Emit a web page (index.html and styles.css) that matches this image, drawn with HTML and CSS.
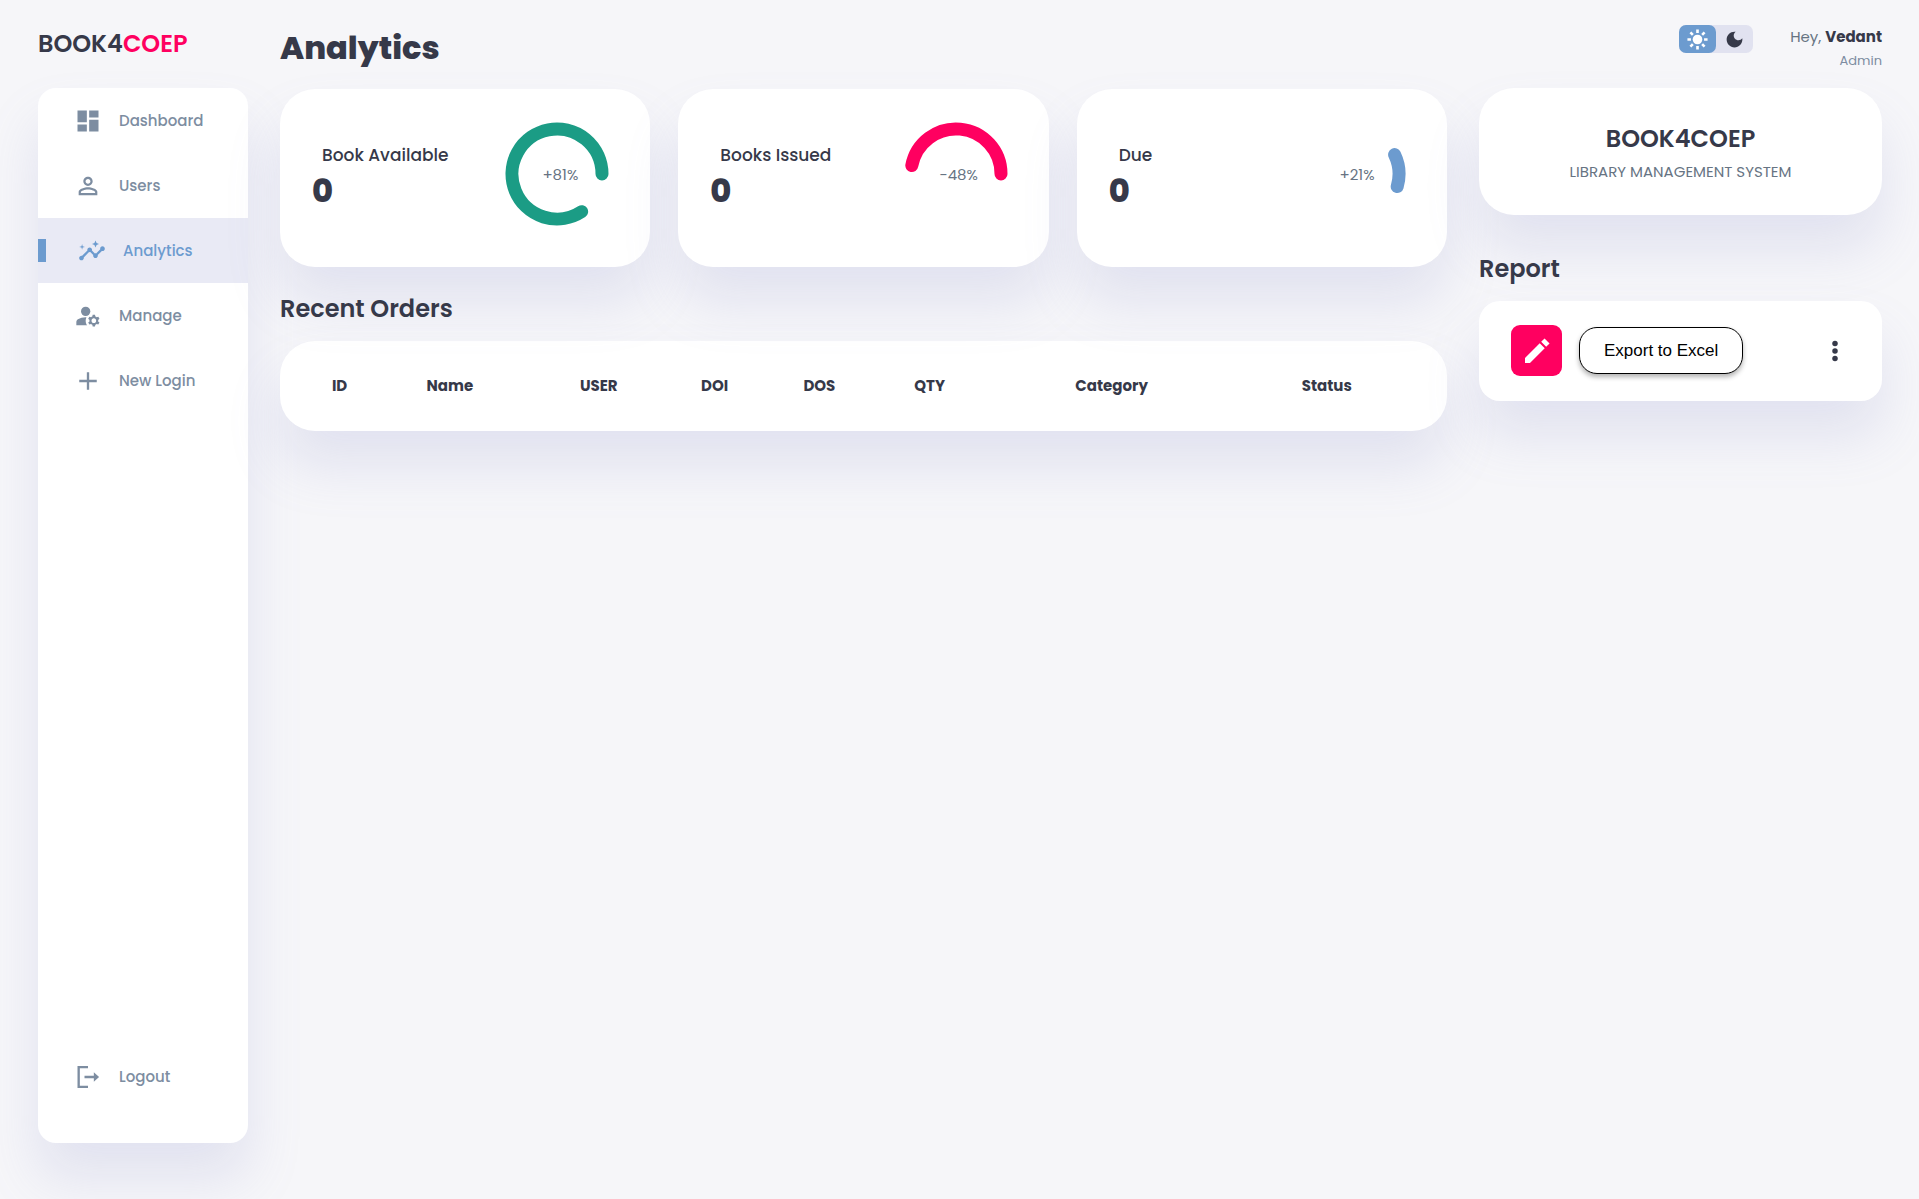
FILE: index.html
```html
<!DOCTYPE html>
<html lang="en">
<head>
<meta charset="utf-8">
<meta name="viewport" content="width=device-width, initial-scale=1">
<title>BOOK4COEP - Analytics</title>
<link rel="stylesheet" href="styles.css">
</head>
<body>
<div class="container">
  <aside>
    <div class="logo">BOOK4<span class="danger">COEP</span></div>
    <nav class="sidebar" aria-label="Main">
      <a href="#dashboard"><svg class="icon" viewBox="0 0 24 24" aria-hidden="true"><path d="M3 13h8V3H3v10zm0 8h8v-6H3v6zm10 0h8V11h-8v10zm0-18v6h8V3h-8z"/></svg>Dashboard</a>
      <a href="#users"><svg class="icon" viewBox="0 0 24 24" aria-hidden="true"><path d="M12 5.9c1.16 0 2.1.94 2.1 2.1s-.94 2.1-2.1 2.1S9.9 9.16 9.9 8s.94-2.1 2.1-2.1m0 9c2.97 0 6.1 1.46 6.1 2.1v1.1H5.9V17c0-.64 3.13-2.1 6.1-2.1M12 4C9.79 4 8 5.79 8 8s1.79 4 4 4 4-1.79 4-4-1.79-4-4-4zm0 9c-2.67 0-8 1.34-8 4v3h16v-3c0-2.66-5.33-4-8-4z"/></svg>Users</a>
      <a href="#analytics" class="active" aria-current="page"><svg class="icon" viewBox="0 0 24 24" aria-hidden="true"><path d="M21 8c-1.45 0-2.26 1.44-1.93 2.51l-3.55 3.56c-.3-.09-.74-.09-1.04 0l-2.55-2.55C12.27 10.45 11.46 9 10 9c-1.45 0-2.27 1.44-1.93 2.52l-4.56 4.55C2.44 15.74 1 16.55 1 18c0 1.1.9 2 2 2 1.45 0 2.26-1.44 1.93-2.51l4.55-4.56c.3.09.74.09 1.04 0l2.55 2.55C12.73 16.55 13.54 18 15 18c1.45 0 2.27-1.44 1.93-2.52l3.56-3.55C21.56 12.26 23 11.45 23 10c0-1.1-.9-2-2-2z"/><path d="M15 9l.94-2.07L18 6l-2.06-.93L15 3l-.92 2.07L12 6l2.08.93zM3.5 11L4 9l2-.5L4 8l-.5-2L3 8l-2 .5L3 9z"/></svg>Analytics</a>
      <a href="#manage"><svg class="icon" viewBox="0 0 24 24" aria-hidden="true"><circle cx="10" cy="8" r="4"/><path d="M10.67 13.02C10.45 13.01 10.23 13 10 13c-2.42 0-4.68.67-6.61 1.82C2.51 15.34 2 16.32 2 17.35V20h9.26C10.47 18.87 10 17.49 10 16c0-1.07.25-2.07.67-2.98z"/><path fill-rule="evenodd" d="M20.75 16c0-.22-.03-.42-.06-.63l1.14-1.01-1-1.73-1.45.49c-.32-.27-.68-.48-1.08-.63L18 11h-2l-.3 1.49c-.4.15-.76.36-1.08.63l-1.45-.49-1 1.73 1.14 1.01c-.03.21-.06.41-.06.63s.03.42.06.63l-1.14 1.01 1 1.73 1.45-.49c.32.27.68.48 1.08.63L16 21h2l.3-1.49c.4-.15.76-.36 1.08-.63l1.45.49 1-1.73-1.14-1.01c.03-.21.06-.41.06-.63zM17 18c-1.1 0-2-.9-2-2s.9-2 2-2 2 .9 2 2-.9 2-2 2z"/></svg>Manage</a>
      <a href="#new-login"><svg class="icon" viewBox="0 0 24 24" aria-hidden="true"><path d="M19.5 13H13v6.500h-2V13H4.500v-2H11V4.500h2V11h6.500z"/></svg>New Login</a>
      <a href="#logout" class="logout"><svg class="icon" viewBox="0 0 24 24" aria-hidden="true"><path d="M9 11h8V8l4.500 4-4.500 4v-3H9z"/><path d="M5 4.500h7V2.500H3v19h9v-2H5z"/></svg>Logout</a>
    </nav>
  </aside>

  <main>
    <h1>Analytics</h1>
    <div class="insights">
      <section class="card insight">
        <div>
          <h3>Book Available</h3>
          <p class="count">0</p>
        </div>
        <div class="progress">
          <svg class="ring ring-green" viewBox="-53 -53 106 106" aria-hidden="true"><path d="M45 0A45 45 0 1 0 24.640 37.650"/></svg>
          <span>+81%</span>
        </div>
      </section>
      <section class="card insight">
        <div>
          <h3>Books Issued</h3>
          <p class="count">0</p>
        </div>
        <div class="progress">
          <svg class="ring ring-pink" viewBox="-53 -53 106 106" aria-hidden="true"><path d="M45 0A45 45 0 0 0 -44.200 -8.500"/></svg>
          <span>-48%</span>
        </div>
      </section>
      <section class="card insight">
        <div>
          <h3>Due</h3>
          <p class="count">0</p>
        </div>
        <div class="progress">
          <svg class="ring ring-blue" viewBox="-53 -53 106 106" aria-hidden="true"><path d="M43.200 12.600A45 45 0 0 0 40.600 -19.400"/></svg>
          <span>+21%</span>
        </div>
      </section>
    </div>

    <section class="orders">
      <h2>Recent Orders</h2>
      <div class="card table-card">
        <table>
          <colgroup><col class="c-id"><col class="c-name"><col class="c-user"><col class="c-doi"><col class="c-dos"><col class="c-qty"><col class="c-category"><col class="c-status"></colgroup>
          <thead>
            <tr><th>ID</th><th>Name</th><th>USER</th><th>DOI</th><th>DOS</th><th>QTY</th><th>Category</th><th>Status</th></tr>
          </thead>
        </table>
      </div>
    </section>
  </main>

  <div class="right">
    <div class="top">
      <div class="theme-toggler">
        <button type="button" class="on" aria-label="Light theme"><svg viewBox="0 0 24 24" aria-hidden="true"><circle cx="12" cy="12" r="5.500"/><path class="rays" d="M12 .5v4M12 19.500v4M.5 12h4M19.500 12h4M3.900 3.900l2.800 2.800M17.300 17.300l2.800 2.800M3.900 20.100l2.800-2.800M17.300 6.700l2.800-2.800"/></svg></button>
        <button type="button" aria-label="Dark theme"><svg viewBox="0 0 24 24" aria-hidden="true"><path d="M12 3c-4.970 0-9 4.030-9 9s4.030 9 9 9 9-4.030 9-9c0-.46-.04-.92-.1-1.360-.98 1.370-2.580 2.260-4.400 2.260-2.980 0-5.400-2.420-5.400-5.400 0-1.810.89-3.420 2.260-4.400C12.920 3.040 12.460 3 12 3z"/></svg></button>
      </div>
      <div class="profile">
        <p>Hey, <b>Vedant</b></p>
        <small>Admin</small>
      </div>
    </div>

    <section class="card brand">
      <h2>BOOK4COEP</h2>
      <p>LIBRARY MANAGEMENT SYSTEM</p>
    </section>

    <section class="report">
      <h2>Report</h2>
      <div class="card export">
        <span class="edit"><svg viewBox="0 0 24 24" aria-hidden="true"><path d="M3 17.250V21h3.750L17.810 9.940l-3.750-3.750L3 17.250zM21.410 6.340l-3.750-3.750-2.530 2.540 3.750 3.750 2.530-2.540z"/></svg></span>
        <button type="button" class="export-button">Export to Excel</button>
        <button type="button" class="more" aria-label="More options"><svg viewBox="0 0 24 24" aria-hidden="true"><circle cx="12" cy="6" r="2.200"/><circle cx="12" cy="12" r="2.200"/><circle cx="12" cy="18" r="2.200"/></svg></button>
      </div>
    </section>
  </div>
</div>
</body>
</html>
```
FILE: styles.css
```css
:root {
  --primary: #6c9bcf;
  --danger: #ff0060;
  --success: #1b9c85;
  --dark: #363949;
  --dark-variant: #677483;
  --info-dark: #7d8da1;
  --light: rgba(132, 139, 200, 0.18);
  --background: #f6f6f9;
  --shadow: 0 35px 53px var(--light);
}

* {
  box-sizing: border-box;
  margin: 0;
  padding: 0;
}

body {
  min-height: 100vh;
  background: var(--background);
  color: var(--dark);
  font-family: Poppins, Inter, sans-serif;
  font-size: 15px;
  overflow-x: hidden;
}

a {
  text-decoration: none;
}

button {
  border: 0;
  background: none;
  color: inherit;
  font: inherit;
  cursor: pointer;
}

svg {
  display: block;
  fill: currentColor;
}

h1 {
  font-size: 32px;
  font-weight: 800;
  line-height: 48px;
}

h2 {
  font-size: 24px;
  font-weight: 600;
  line-height: 38px;
}

.container {
  display: grid;
  grid-template-columns: 210px minmax(0, 1fr) 403px;
  gap: 32px;
  padding: 0 37px 0 38px;
}

.card {
  background: #fff;
  border-radius: 35px;
  box-shadow: var(--shadow);
}

/* Sidebar */
.logo {
  padding-top: 25px;
  height: 88px;
  font-size: 24px;
  font-weight: 600;
  line-height: 38px;
}

.danger {
  color: var(--danger);
}

.sidebar {
  display: flex;
  flex-direction: column;
  height: 88vh;
  padding-bottom: 34px;
  background: #fff;
  border-radius: 18px;
  box-shadow: var(--shadow);
}

.sidebar a {
  display: flex;
  flex-shrink: 0;
  align-items: center;
  gap: 17px;
  height: 65px;
  padding-left: 36px;
  color: var(--info-dark);
  font-size: 15px;
  font-weight: 500;
}

.sidebar .active {
  padding-left: 0;
  background: var(--light);
  color: var(--primary);
}

.sidebar .active::before {
  content: "";
  width: 8px;
  height: 23px;
  margin-right: 15px;
  background: var(--primary);
}

.sidebar .logout {
  margin-top: auto;
}

.icon {
  width: 28px;
  height: 28px;
}

/* Main column */
main {
  padding-top: 24px;
}

.insights {
  display: grid;
  grid-template-columns: repeat(3, minmax(0, 1fr));
  gap: 28px;
  margin-top: 17px;
}

.insight {
  display: flex;
  justify-content: space-between;
  height: 178px;
  padding: 32px 40px 0 32px;
}

.insight h3 {
  padding: 20px 0 0 10px;
  font-size: 17px;
  font-weight: 500;
  line-height: 28px;
}

.count {
  font-size: 32px;
  font-weight: 800;
  line-height: 44px;
}

.progress {
  display: grid;
  place-items: center;
  width: 106px;
  height: 106px;
}

.progress > * {
  grid-area: 1 / 1;
}

.progress span {
  padding-left: 6px;
  color: var(--dark-variant);
  font-size: 15px;
}

.ring {
  width: 106px;
  height: 106px;
  fill: none;
  stroke-width: 13;
  stroke-linecap: round;
}

.ring-green {
  stroke: var(--success);
}

.ring-pink {
  stroke: var(--danger);
}

.ring-blue {
  stroke: var(--primary);
}

.orders {
  margin-top: 23px;
}

.table-card {
  margin-top: 13px;
  padding: 31px 32px 33px;
}

table {
  width: 100%;
  border-collapse: collapse;
  table-layout: fixed;
}

th {
  height: 26px;
  font-size: 15px;
  font-weight: 700;
  text-align: center;
}

.c-id { width: 5%; }
.c-name { width: 15%; }
.c-user { width: 12%; }
.c-doi { width: 9%; }
.c-dos { width: 10%; }
.c-qty { width: 10%; }
.c-category { width: 23%; }
.c-status { width: 16%; }

/* Right column */
.top {
  display: flex;
  justify-content: flex-end;
  align-items: flex-start;
  gap: 37px;
  height: 88px;
  padding-top: 25px;
}

.theme-toggler {
  display: flex;
  height: 28px;
  background: var(--light);
  border-radius: 7px;
}

.theme-toggler button {
  display: grid;
  place-items: center;
  width: 37px;
  border-radius: 7px;
}

.theme-toggler .on {
  background: var(--primary);
  color: #fff;
}

.theme-toggler svg {
  width: 21px;
  height: 21px;
}

.rays {
  stroke: currentColor;
  stroke-width: 3;
}

.profile {
  color: var(--dark-variant);
  text-align: right;
}

.profile p {
  line-height: 24px;
}

.profile b {
  color: var(--dark);
  font-weight: 700;
}

.profile small {
  display: block;
  color: var(--info-dark);
  font-size: 13px;
  line-height: 24px;
}

.brand {
  padding: 32px 32px 29px;
  text-align: center;
}

.brand p {
  color: var(--dark-variant);
  line-height: 28px;
}

.report {
  margin-top: 35px;
}

.export {
  display: flex;
  align-items: center;
  margin-top: 13px;
  padding: 24px 32px 25px;
  border-radius: 21px;
}

.edit {
  display: grid;
  place-items: center;
  width: 51px;
  height: 51px;
  background: var(--danger);
  border-radius: 9px;
  color: #fff;
}

.edit svg {
  width: 32px;
  height: 32px;
}

.export-button {
  height: 47px;
  margin-left: 17px;
  padding: 0 24px;
  background: #fff;
  border: 1px solid #000;
  border-radius: 18px;
  box-shadow: 0 3px 5px rgba(0, 0, 0, 0.3);
  color: #000;
  font-family: "Liberation Sans", sans-serif;
  font-size: 17px;
}

.more {
  margin-left: auto;
}

.more svg {
  width: 30px;
  height: 30px;
}
```
